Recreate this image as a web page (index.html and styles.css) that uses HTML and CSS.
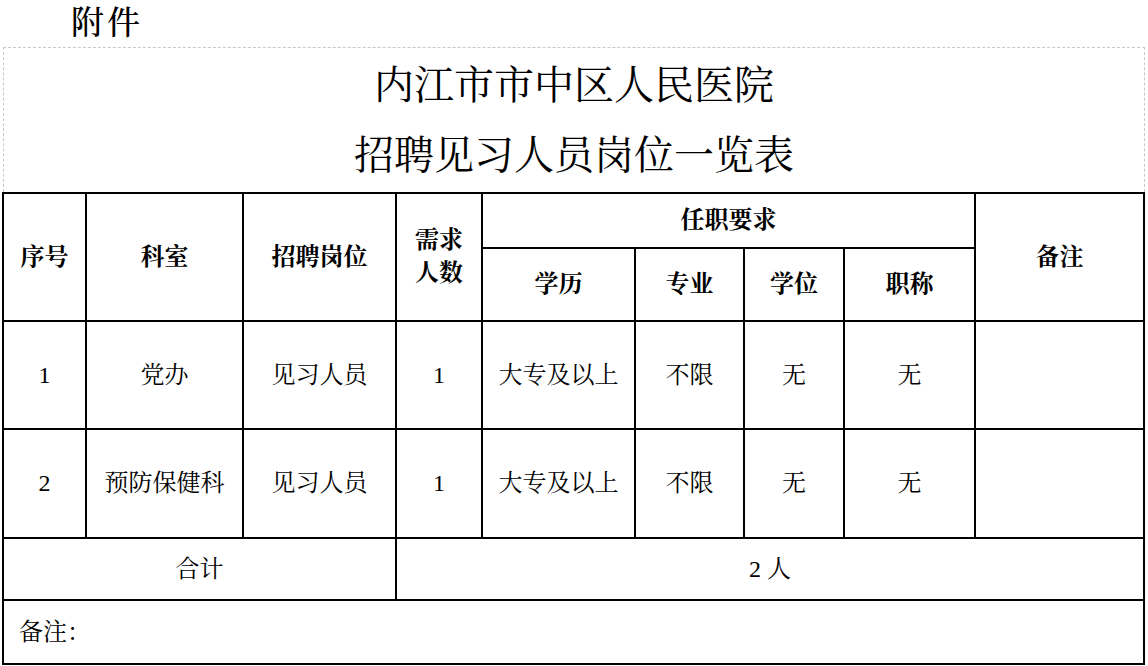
FILE: index.html
```html
<!DOCTYPE html>
<html lang="zh-CN">
<head>
<meta charset="utf-8">
<link rel="stylesheet" href="styles.css">
</head>
<body>
<div class="attach">附件</div>
<div class="title-box">
  <div class="title-line">内江市市中区人民医院</div>
  <div class="title-line">招聘见习人员岗位一览表</div>
</div>
<table class="grid">
  <colgroup>
    <col class="c1"><col class="c2"><col class="c3"><col class="c4"><col class="c5"><col class="c6"><col class="c7"><col class="c8"><col class="c9">
  </colgroup>
  <tr class="h1">
    <th rowspan="2">序号</th>
    <th rowspan="2">科室</th>
    <th rowspan="2">招聘岗位</th>
    <th rowspan="2" class="two">需求<br>人数</th>
    <th colspan="4">任职要求</th>
    <th rowspan="2">备注</th>
  </tr>
  <tr class="h2">
    <th>学历</th>
    <th>专业</th>
    <th>学位</th>
    <th>职称</th>
  </tr>
  <tr class="r1">
    <td>1</td><td>党办</td><td>见习人员</td><td>1</td><td>大专及以上</td><td>不限</td><td>无</td><td>无</td><td></td>
  </tr>
  <tr class="r2">
    <td>2</td><td>预防保健科</td><td>见习人员</td><td>1</td><td>大专及以上</td><td>不限</td><td>无</td><td>无</td><td></td>
  </tr>
  <tr class="sum">
    <td colspan="3">合计</td>
    <td colspan="6">2 人</td>
  </tr>
  <tr class="note">
    <td colspan="9" class="note-cell">备注：</td>
  </tr>
</table>
</body>
</html>
```
FILE: styles.css
```css
html, body {
  margin: 0;
  padding: 0;
  background: #fff;
}
body {
  width: 1148px;
  font-family: "Liberation Serif", "Noto Serif CJK SC", "Noto Sans CJK SC", serif;
  color: #000;
}
.attach {
  height: 47px;
  box-sizing: border-box;
  padding-left: 71px;
  font-size: 33px;
  line-height: 46px;
  letter-spacing: 3px;
  font-weight: 500;
}
.title-box {
  margin-left: 3px;
  width: 1142px;
  box-sizing: border-box;
  height: 145px;
  border: 1px dashed #c8c8c8;
  border-bottom: none;
  padding-top: 3px;
  text-align: center;
}
.title-line {
  font-size: 40px;
  line-height: 70px;
}
.grid {
  margin-left: 2px;
  border-collapse: collapse;
  table-layout: fixed;
  width: 1141px;
}
.grid th, .grid td {
  border: 2px solid #000;
  padding: 0;
  text-align: center;
  vertical-align: middle;
  font-size: 24px;
  line-height: 33px;
}
.grid th {
  font-weight: 700;
}
.c1 { width: 83px; }
.c2 { width: 157px; }
.c3 { width: 153px; }
.c4 { width: 86px; }
.c5 { width: 153px; }
.c6 { width: 109px; }
.c7 { width: 100px; }
.c8 { width: 131px; }
.c9 { width: 169px; }
.h1 { height: 55px; }
.h2 { height: 73px; }
.r1 { height: 108px; }
.r2 { height: 109px; }
.sum { height: 62px; }
.note { height: 64px; }
.grid .note-cell {
  text-align: left;
  padding-left: 15px;
}
```
